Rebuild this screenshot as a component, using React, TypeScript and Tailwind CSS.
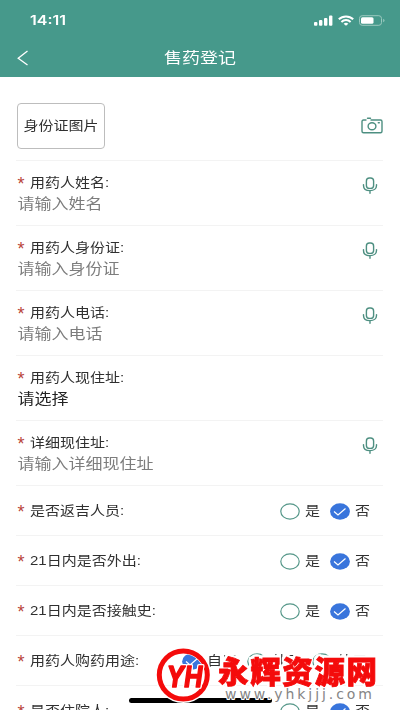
const inputFields = [
  { label: "用药人姓名:", placeholder: "请输入姓名", mic: true },
  { label: "用药人身份证:", placeholder: "请输入身份证", mic: true },
  { label: "用药人电话:", placeholder: "请输入电话", mic: true },
  { label: "用药人现住址:", value: "请选择", mic: false },
  { label: "详细现住址:", placeholder: "请输入详细现住址", mic: true },
];

const yesNoFields = ["是否返吉人员:", "21日内是否外出:", "21日内是否接触史:"];

const MicIcon = () => (
  <svg className="h-[17px] w-4 shrink-0" viewBox="0 0 16 17" fill="none" stroke="#4d8f81" strokeWidth="1.4" strokeLinecap="round">
    <rect x="4.4" y="1" width="7.2" height="10.4" rx="3" />
    <path d="M1.5 7.6v.8c0 3.4 2.7 5.2 6.5 5.2s6.5-1.8 6.5-5.2v-.8M8 13.6v2.6" />
  </svg>
);

const CameraIcon = () => (
  <svg className="h-[17px] w-[22px]" viewBox="0 0 22 17" fill="none" stroke="#4d8f81" strokeWidth="1.4" strokeLinecap="round" strokeLinejoin="round">
    <path d="M5 3H2.5Q1 3 1 4.5v9.8Q1 15.8 2.5 15.8h17q1.5 0 1.5-1.5V4.5Q21 3 19.5 3H10M6.5 1.2h3" />
    <ellipse cx="11" cy="9.3" rx="3.9" ry="3.5" />
    <path d="M17.3 5.7h1" />
  </svg>
);

const Radio = ({ checked = false }: { checked?: boolean }) => (
  <svg className="h-[17px] w-5 shrink-0" viewBox="0 0 20 17" fill="none">
    {checked ? (
      <>
        <ellipse cx="10" cy="8.5" rx="9.9" ry="8.2" fill="#3975dc" />
        <path d="m4 8.5 4 3.5 7.5-6.5" stroke="#fff" strokeWidth="1.2" />
      </>
    ) : (
      <ellipse cx="10" cy="8.5" rx="9.2" ry="7.6" fill="#fff" stroke="#559789" strokeWidth="1.2" />
    )}
  </svg>
);

const Option = ({ text, checked }: { text: string; checked?: boolean }) => (
  <div className="flex items-center gap-[5px]">
    <Radio checked={checked} />
    <span className="scale-y-[0.87] whitespace-nowrap text-[15px] leading-5">{text}</span>
  </div>
);

const Label = ({ text }: { text: string }) => (
  <div className="flex h-5 items-center">
    <span className="w-[12.5px] pt-0.5 text-[18px] leading-5 text-[#b9443b]">*</span>
    <span className="scale-y-[0.87] whitespace-nowrap text-[15px] leading-5">{text}</span>
  </div>
);

const StatusBar = () => (
  <div className="flex h-10 items-center justify-between pl-[30px] pr-[15px]">
    <span className="scale-y-[0.85] font-[Inter] text-[16px] font-semibold">14:11</span>
    <div className="flex items-center gap-[5px]">
      <svg className="h-[11px] w-[19px]" viewBox="0 0 19 11" fill="#fff">
        <rect x="0" y="7" width="3.4" height="3.7" rx="1" />
        <rect x="5" y="5" width="3.4" height="5.7" rx="1" />
        <rect x="10" y="3" width="3.4" height="7.7" rx="1" />
        <rect x="15" y="0.5" width="3.4" height="10.2" rx="1" />
      </svg>
      <svg className="h-[11px] w-4" viewBox="0 0 16 11" fill="none" stroke="#fff" strokeWidth="2">
        <path d="M.8 4.3C4.8.4 11.2.4 15.2 4.3M3.4 6.9c2.6-2.4 6.6-2.4 9.2 0" />
        <path d="m5.6 8.7 2.4 2 2.4-2Q8 7 5.6 8.7Z" fill="#fff" stroke="none" />
      </svg>
      <svg className="h-[11px] w-[26px]" viewBox="0 0 26 11" fill="none">
        <rect x="0.5" y="0.7" width="22" height="9.6" rx="2.7" stroke="#9bc9bf" />
        <rect x="2" y="2.2" width="12.5" height="6.6" rx="1.5" fill="#fff" />
        <path d="M24.2 3.8v3.4q1.3-.5 1.3-1.7t-1.3-1.7Z" fill="#9bc9bf" />
      </svg>
    </div>
  </div>
);

const Watermark = () => (
  <div className="absolute left-[155px] top-[647px] h-[63px] w-[245px]">
    <svg className="absolute left-0 top-0 h-[56px] w-[58px] overflow-visible" viewBox="0 0 58 56">
      <ellipse cx="28.3" cy="28" rx="24.5" ry="24.5" fill="none" stroke="#fff" strokeWidth="7" />
      <ellipse cx="28.3" cy="28" rx="24" ry="24" fill="none" stroke="#f40b0b" strokeWidth="5" />
      <text
        className="[filter:drop-shadow(1px_0_0_#fff)_drop-shadow(-1px_0_0_#fff)_drop-shadow(0_1px_0_#fff)_drop-shadow(0_-1px_0_#fff)]"
        x="11.5" y="39.5" fontFamily="Inter, sans-serif" fontSize="28" fontStyle="italic" fontWeight="700"
        fill="#f40b0b" stroke="#f40b0b" strokeWidth="1.5" strokeLinejoin="round" textLength="36" lengthAdjust="spacingAndGlyphs"
      >
        YH
      </text>
    </svg>
    <svg className="absolute left-[60px] top-0 h-[63px] w-[185px]" viewBox="0 0 185 63">
      <text
        className="[filter:drop-shadow(1.5px_0_0_#fff)_drop-shadow(-1.5px_0_0_#fff)_drop-shadow(0_1.5px_0_#fff)_drop-shadow(0_-1.5px_0_#fff)]"
        x="3" y="35.5" fontFamily="'Noto Sans CJK SC', sans-serif" fontSize="30.5" fontWeight="900"
        fill="#f40b0b" stroke="#f40b0b" strokeWidth="0.8" textLength="159"
      >
        永辉资源网
      </text>
      <text x="10" y="52" fontFamily="'DejaVu Sans', sans-serif" fontSize="14" fill="#858585" stroke="#fff" strokeWidth="2" paintOrder="stroke" textLength="147">www.yhkjjj.com</text>
    </svg>
  </div>
);

export default function App() {
  return (
    <div className="relative h-[710px] w-[400px] overflow-hidden bg-white font-['Liberation_Sans','Noto_Sans_CJK_SC',sans-serif] text-[#303030]">
      <header className="h-[77px] bg-[#46998b] text-white">
        <StatusBar />
        <div className="grid h-[36px] grid-cols-[60px_1fr_60px] items-center">
          <svg className="ml-[17px] h-4 w-3" viewBox="0 0 12 16" fill="none" stroke="#fff" strokeWidth="1.3">
            <path d="M10.5 1 1.2 8.2l9.3 6.8" />
          </svg>
          <h1 className="scale-y-[0.85] text-center text-[18px] leading-6">售药登记</h1>
        </div>
      </header>

      <main className="ml-4 mr-[17px]">
        <div className="flex h-[84px] items-center justify-between border-b border-[#f3f3f3] pl-px pt-[14px]">
          <div className="flex h-[46px] w-[88px] items-center justify-center rounded-[4px] border border-[#bdbdbd]">
            <span className="scale-y-[0.87] whitespace-nowrap text-[15px] leading-5">身份证图片</span>
          </div>
          <CameraIcon />
        </div>

        {inputFields.map((field) => (
          <div key={field.label} className="flex h-[65px] items-start justify-between border-b border-[#f3f3f3] pl-[1.5px] pr-[5px] pt-3">
            <div>
              <Label text={field.label} />
              <div className={`mt-px h-[22px] origin-center scale-y-[0.87] whitespace-nowrap text-[17px] leading-[22px] ${field.value ? "text-[#222]" : "text-[#7d7d7d]"}`}>
                {field.value || field.placeholder}
              </div>
            </div>
            {field.mic && (
              <div className="pt-1">
                <MicIcon />
              </div>
            )}
          </div>
        ))}

        {yesNoFields.map((label) => (
          <div key={label} className="flex h-[50px] items-center justify-between border-b border-[#f3f3f3] pl-[1.5px] pr-[13px] pt-px">
            <Label text={label} />
            <div className="flex gap-[10px]">
              <Option text="是" />
              <Option text="否" checked />
            </div>
          </div>
        ))}

        <div className="flex h-[50px] items-center justify-between border-b border-[#f3f3f3] pl-[1.5px] pr-4 pt-px">
          <Label text="用药人购药用途:" />
          <div className="flex gap-[10px]">
            <Option text="自用" checked />
            <Option text="外用" />
            <Option text="外用" />
          </div>
        </div>

        <div className="flex h-[50px] items-center justify-between pl-[1.5px] pr-[13px]">
          <Label text="是否住院人:" />
          <div className="flex gap-[10px]">
            <Option text="是" />
            <Option text="否" checked />
          </div>
        </div>
      </main>

      {/* home indicator */}
      <div className="absolute left-[129px] top-[698px] h-[5px] w-[143px] rounded-full bg-black" />
      <Watermark />
    </div>
  );
}
